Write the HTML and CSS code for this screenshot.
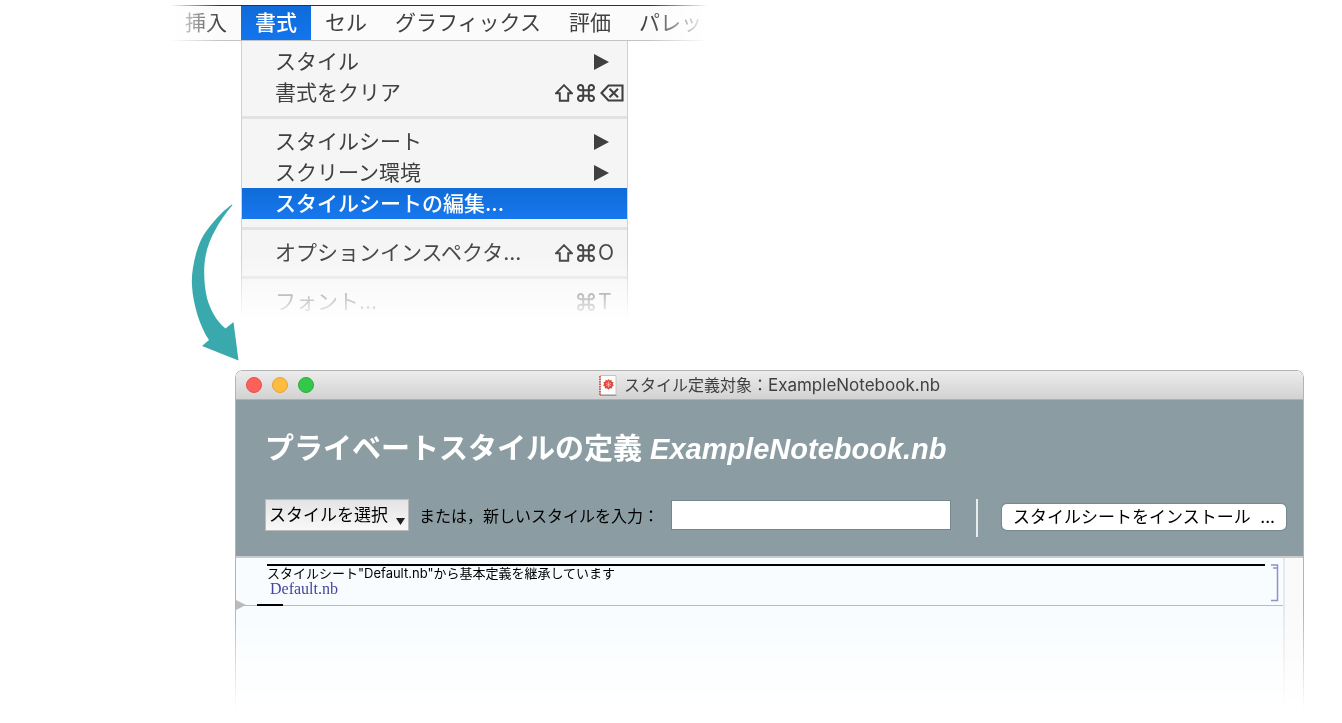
FILE: index.html
```
<!DOCTYPE html>
<html lang="ja">
<head>
<meta charset="utf-8">
<title>スタイルシートの編集</title>
<link rel="stylesheet" href="styles.css">
</head>
<body>
<svg class="defs" aria-hidden="true">
  <symbol id="shift" viewBox="0 0 18 18"><path d="M9 1.2 17 9.3H13.2V16.8H4.8V9.3H1Z" fill="none" stroke="currentColor" stroke-width="1.9"/></symbol>
  <symbol id="command" viewBox="0 0 18 18"><path d="M6.2 6.2H11.8V11.8H6.2ZM6.2 6.2H3.7A2.6 2.6 0 1 1 6.2 3.7ZM11.8 6.2V3.7A2.6 2.6 0 1 1 14.3 6.2ZM11.8 11.8H14.3A2.6 2.6 0 1 1 11.8 14.3ZM6.2 11.8V14.3A2.6 2.6 0 1 1 3.7 11.8Z" fill="none" stroke="currentColor" stroke-width="2"/></symbol>
  <symbol id="delete" viewBox="0 0 24 18"><path d="M1.5 9 8.5 1.5H22.5V16.5H8.5ZM9.5 4.8 18 13.2M18 4.8 9.5 13.2" fill="none" stroke="currentColor" stroke-width="2.1"/></symbol>
  <symbol id="submenu" viewBox="0 0 15 16"><path d="M0 0 15 8 0 16Z" fill="currentColor"/></symbol>
</svg>
<main class="page">
  <section class="menus">
    <nav class="menubar">
      <button class="menubar-item">挿入</button>
      <button class="menubar-item open">書式</button>
      <button class="menubar-item">セル</button>
      <button class="menubar-item">グラフィックス</button>
      <button class="menubar-item">評価</button>
      <button class="menubar-item last">パレッ</button>
    </nav>
    <div class="menu-row">
      <svg class="pointer" viewBox="170 41 71 320" aria-hidden="true">
        <path d="M232 204.500C222 211 207 228 201 240C195 253 191 272 192 286C193 304 200 327 209 340L202 346L238.500 360.500L233.500 322L225.500 328.500C216 321 210 309 207 298C204 286 203 267 206 254C209 239 219 221 232.500 205Z" fill="#39a9ad"/>
      </svg>
      <div class="menu" role="menu">
        <button class="menu-item" role="menuitem">スタイル<svg class="submenu"><use href="#submenu"/></svg></button>
        <button class="menu-item" role="menuitem">書式をクリア<span class="shortcut"><svg class="shift"><use href="#shift"/></svg><svg class="command"><use href="#command"/></svg><svg class="delete"><use href="#delete"/></svg></span></button>
        <hr class="separator">
        <button class="menu-item" role="menuitem">スタイルシート<svg class="submenu"><use href="#submenu"/></svg></button>
        <button class="menu-item" role="menuitem">スクリーン環境<svg class="submenu"><use href="#submenu"/></svg></button>
        <button class="menu-item selected" role="menuitem">スタイルシートの編集...</button>
        <hr class="separator">
        <button class="menu-item" role="menuitem">オプションインスペクタ...<span class="shortcut"><svg class="shift"><use href="#shift"/></svg><svg class="command"><use href="#command"/></svg><span class="key">O</span></span></button>
        <hr class="separator">
        <button class="menu-item dim" role="menuitem">フォント...<span class="shortcut"><svg class="command"><use href="#command"/></svg><span class="key">T</span></span></button>
      </div>
    </div>
  </section>

  <section class="window">
    <header class="titlebar">
      <div class="lights">
        <button class="light close" aria-label="閉じる"></button>
        <button class="light minimize" aria-label="しまう"></button>
        <button class="light zoom" aria-label="拡大"></button>
      </div>
      <div class="title">
        <svg class="doc-icon" viewBox="0 0 18 21" aria-hidden="true">
          <path d="M1 20.500H17.500" stroke="#999"/>
          <path d="M1 .5H17V19.500H1Z" fill="#fff" stroke="#c4c4c4"/>
          <path d="M1 1V20" stroke="#d9261c" stroke-width="1.400" stroke-dasharray="1.500 1"/>
          <path d="M9.500 4 10.600 5.500 12.500 4.800 12.700 6.700 14.700 7.200 13.800 9 15 10.600 13.200 11.500 13.100 13.500 11.100 13.200 9.500 14.800 7.900 13.200 5.900 13.500 5.800 11.500 4 10.600 5.200 9 4.300 7.200 6.300 6.700 6.500 4.800 8.400 5.500Z" fill="#e8473e"/>
          <path d="M9.500 6.500V12.500M7 8.200 12 10.800M12 8.200 7 10.800" stroke="#fbc4bf" stroke-width=".7"/>
        </svg>
        <span>スタイル定義対象：<span class="title-file">ExampleNotebook.nb</span></span>
      </div>
    </header>
    <div class="panel">
      <h1 class="heading">プライベートスタイルの定義 <em>ExampleNotebook.nb</em></h1>
      <form class="controls">
        <div class="select-box">
          <select class="style-select" aria-label="スタイルを選択"><option>スタイルを選択</option></select>
          <svg class="caret" viewBox="0 0 9 7" aria-hidden="true"><path d="M0 0H9L4.500 7Z" fill="#222"/></svg>
        </div>
        <label class="new-label" for="new-style">または，新しいスタイルを入力：</label>
        <input class="new-input" id="new-style" type="text">
        <span class="divider"></span>
        <button class="install" type="button">スタイルシートをインストール&nbsp; ...</button>
      </form>
    </div>
    <div class="notebook">
      <div class="cells">
        <div class="cell">
          <div class="cell-body">
            <p class="cell-text">スタイルシート"Default.nb"から基本定義を継承しています</p>
            <a class="cell-link" href="#">Default.nb</a>
          </div>
          <svg class="bracket" viewBox="0 0 8 38" aria-hidden="true"><path d="M0 1H6.500V36.500H0M2 4H6" fill="none" stroke="#8f90cc" stroke-width="1.500"/></svg>
        </div>
        <div class="insertion">
          <svg class="marker" viewBox="0 0 10 10" aria-hidden="true"><path d="M0 0 10 5 0 10Z" fill="#bbb"/></svg>
          <span class="cursor"></span>
        </div>
      </div>
      <div class="scrollbar"></div>
    </div>
  </section>
</main>
</body>
</html>
```
FILE: styles.css
```
* { box-sizing: border-box; }
body {
  margin: 0;
  background: #fff;
  font-family: Inter, "Noto Sans CJK JP", sans-serif;
  color: #404040;
}
button, select, input { font: inherit; color: inherit; margin: 0; }
.defs { display: none; }
.page { padding: 5px 38px 8px 170px; }

.menus { width: 540px; max-width: 100%; }
.menubar {
  display: flex;
  height: 36px;
  padding-left: 1px;
  background: #fbfbfb;
  border-top: 1px solid #333;
  border-bottom: 1px solid #c4c4c4;
  mask-image: linear-gradient(to right, transparent, #000 50px, #000 480px, transparent 538px);
}
.menubar-item {
  flex: none;
  padding: 0 14px;
  border: 0;
  background: none;
  font-size: 21px;
  line-height: 34px;
  white-space: nowrap;
}
.menubar-item.last { padding-right: 0; }
.menubar-item.open {
  background: linear-gradient(#106bd8, #1275ee);
  color: #fff;
  font-weight: 500;
}

.menu-row { display: flex; align-items: flex-start; }
.pointer { flex: none; width: 71px; height: 320px; }
.menu {
  width: 387px;
  padding-top: 5px;
  background: #f5f5f5;
  border: solid #d0d0d0;
  border-width: 0 1px;
  mask-image: linear-gradient(#000 150px, rgba(0, 0, 0, .95) 220px, rgba(0, 0, 0, .5) 248px, transparent 280px);
}
.menu-item {
  display: flex;
  align-items: center;
  justify-content: space-between;
  width: 100%;
  height: 31px;
  padding: 0 0 0 33px;
  border: 0;
  background: none;
  font-size: 21px;
  line-height: 30px;
  text-align: left;
  white-space: nowrap;
}
.menu-item.selected {
  background: linear-gradient(#106bd8, #1275ee);
  color: #fff;
  font-weight: 500;
}
.menu-item.dim { color: #606060; }
.separator {
  height: 3px;
  margin: 8px 0 7px;
  border: 0;
  background: #e2e2e2;
}
.submenu { width: 15px; height: 16px; margin-right: 18px; }
.shortcut {
  display: grid;
  grid-template-columns: 22px 21px 29px;
  align-items: center;
}
.shift, .command { width: 18px; height: 18px; }
.command { grid-column: 2; }
.delete { width: 24px; height: 18px; margin-left: 2px; }
.key { font-size: 21px; }

.window {
  margin: 9px 0 0 65px;
  border: solid #b4b4b4;
  border-width: 1px 1px 0;
  border-radius: 7px 7px 0 0;
  overflow: hidden;
  mask-image: linear-gradient(#000 240px, transparent 340px);
}
.titlebar {
  display: grid;
  grid-template-columns: 1fr auto 1fr;
  align-items: center;
  height: 29px;
  padding: 0 10px;
  background: linear-gradient(#ececec, #d2d2d2);
  border-bottom: 1px solid #b0b0b0;
}
.lights { display: flex; gap: 10px; }
.light {
  width: 16px;
  height: 16px;
  padding: 0;
  border: 1px solid;
  border-radius: 50%;
}
.close { background: #fc605b; border-color: #e6504b; }
.minimize { background: #fdbc40; border-color: #e2a535; }
.zoom { background: #34c84a; border-color: #29ae3c; }
.title {
  display: flex;
  align-items: center;
  gap: 7px;
  font-size: 16px;
  line-height: 28px;
  white-space: nowrap;
}
.doc-icon { width: 18px; height: 21px; }
.title-file { font-size: 17px; }

.panel {
  padding: 26px 17px 18px 29px;
  background: #8b9da2;
}
.heading {
  margin: 0;
  color: #fff;
  font: bold 29px/46px "Liberation Sans", "Noto Sans CJK JP", sans-serif;
}
.controls {
  display: flex;
  align-items: center;
  margin-top: 26px;
  height: 40px;
  color: #000;
  font-size: 16px;
  white-space: nowrap;
}
.select-box { display: grid; flex: none; width: 144px; margin-bottom: 6px; }
.style-select, .caret { grid-area: 1 / 1; }
.style-select {
  appearance: none;
  width: 100%;
  height: 32px;
  padding: 0 0 0 3px;
  border: 1px solid #bbb;
  border-radius: 0;
  background: linear-gradient(#e4e4e4, #f8f8f8);
  font-size: 17px;
}
.caret {
  width: 9px;
  height: 7px;
  margin: 0 4px 6px;
  place-self: end;
  pointer-events: none;
}
.new-label { margin: 0 12px 6px 10px; }
.new-input {
  flex: none;
  width: 280px;
  height: 30px;
  margin-bottom: 6px;
  border: 1px solid #75878c;
  background: #fff;
}
.divider { width: 2px; height: 38px; margin: 0 auto; background: #e8ecee; }
.install {
  width: 284px;
  height: 26px;
  padding: 0;
  margin-bottom: 2px;
  border: 0;
  border-radius: 5px;
  background: #fff;
  box-shadow: 0 0 1px 1px #76888d;
  font-size: 17px;
  line-height: 24px;
}

.notebook {
  display: flex;
  height: 158px;
  background: #f8fcff;
  border-top: 2px solid #c8cccc;
}
.cells { flex: 1; border-right: 2px solid #e8e8e8; }
.scrollbar { width: 18px; background: #fafafa; }
.cell {
  display: flex;
  gap: 6px;
  padding: 6px 4px 0 31px;
  height: 42px;
}
.cell-body { flex: 1; border-top: 2px solid #000; }
.cell-text {
  margin: 0;
  color: #000;
  font-size: 13px;
  line-height: 15px;
}
.cell-link {
  display: block;
  padding-left: 3px;
  color: #45459a;
  font: 16px/16px "Liberation Serif", serif;
  text-decoration: none;
}
.bracket { width: 8px; height: 38px; }
.insertion {
  display: flex;
  align-items: center;
  height: 10px;
  background: linear-gradient(#bbb, #bbb) center / 100% 1px no-repeat;
}
.marker { width: 10px; height: 10px; }
.cursor { width: 26px; height: 2px; margin-left: 11px; background: #000; }
```
